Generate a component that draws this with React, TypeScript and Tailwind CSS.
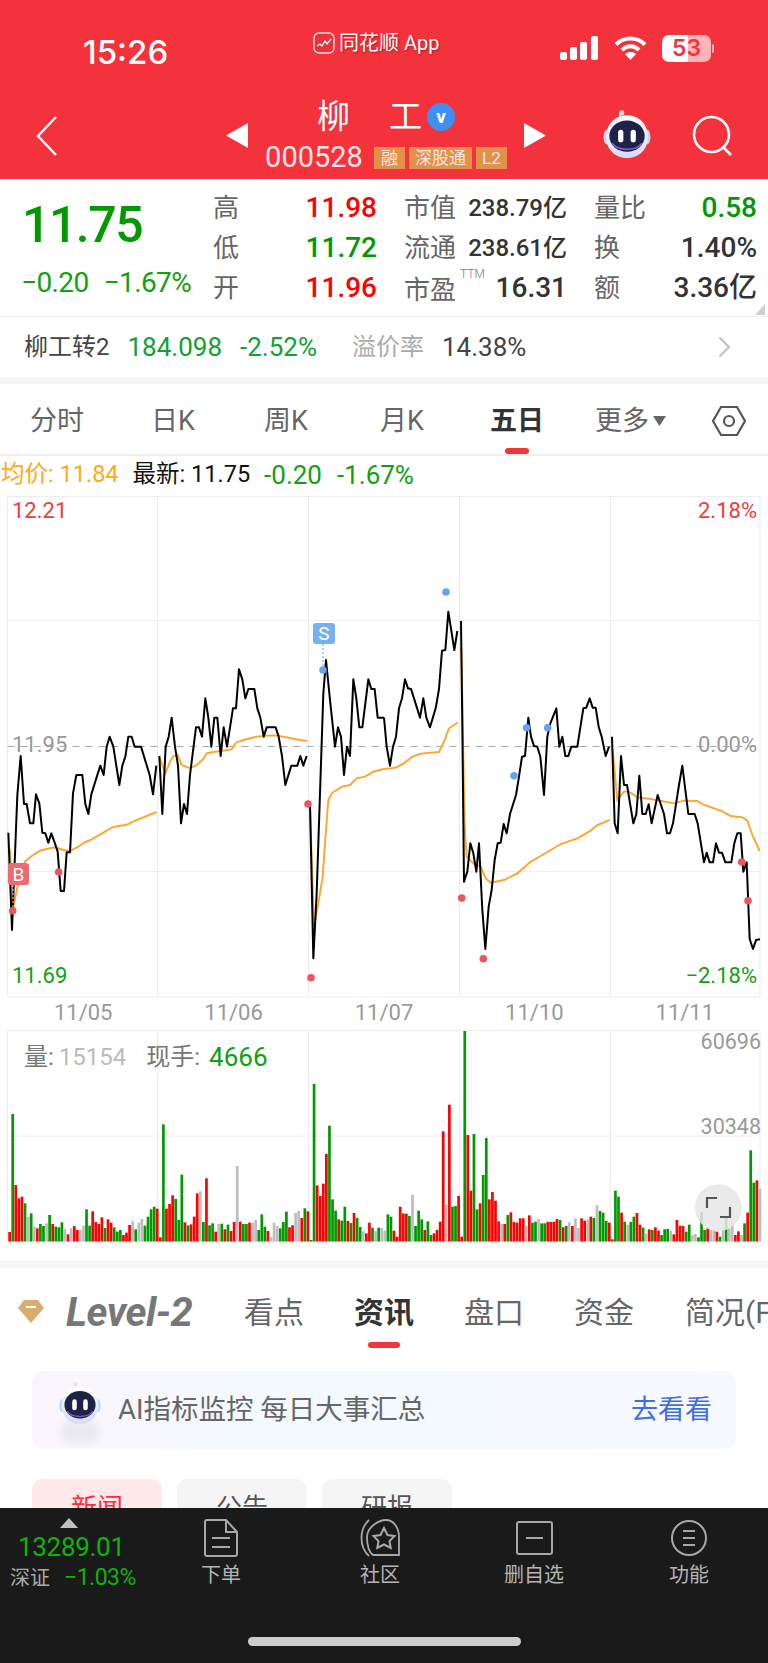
const GREEN = "#009a00";

// chart traces, read off the screenshot at 3x (flat x,y lists)
const priceLeft = [
  [25,518,36,810,52,405,62,288,72,432,80,432,90,490,100,490,108,403,118,430,127,518,136,520,145,548,154,520,164,548,173,575,182,693,192,693,200,577,210,577,219,400,229,345,247,345,256,432,265,462,274,403,292,345,301,317,311,345,320,260,329,230,340,260,358,375,367,317,376,290,385,230,395,230,404,260,423,260,449,345,459,403,469,317],
  [478,288,487,462,497,260,506,230,515,173,525,260,534,317,543,490,552,432,561,462,570,345,588,202,597,202,606,230,616,115,625,173,634,260,643,173,652,173,662,288,671,202,681,260,699,145,708,145,717,28,727,58,736,115,745,87,763,87,772,145,781,173,791,230,800,202,827,202,836,230,846,288,856,375,874,317,892,317,901,288,910,317,920,288],
  [930,433,940,895,950,700,960,400,970,100,978,0,990,120,1005,260,1014,202,1023,230,1032,345,1041,260,1050,288,1060,58,1069,115,1078,202,1087,202,1105,58,1114,87,1124,87,1133,173,1152,173],
];
const priceRight = [
  [0,473,8,560,18,617,27,560,36,530,45,445,54,415,63,358,72,385,81,387,90,415,108,473,118,415,127,473,138,502,155,445,165,387,174,272,184,270,193,155,211,270,220,213],
  [231,183,235,500,240,965,250,935,259,850,268,880,277,935,285,850,295,1050,304,1167,314,1040,323,990,332,900,341,850,350,848,359,792,368,820,378,762,396,705,405,650,414,590,423,588,433,473,441,530,450,558,460,560,469,590,480,705,490,530,499,490,517,445,526,560,535,530,544,588,553,588,562,560,580,560,598,445,607,443,617,415,626,443,635,443,644,500,653,530,665,588,675,560],
  [684,530,692,790,701,820,711,588,720,675,729,675,748,790,757,762,766,647,775,762,785,762,794,733,803,790,821,705,840,762,849,820,858,820,867,790,885,675,895,617,913,762,932,762,941,790,960,907,968,878,977,907,987,907,996,850,1005,878,1014,878,1024,907,1042,907,1051,850,1060,820,1070,820,1078,935,1088,907,1097,1137,1107,1167,1116,1140,1128,1138],
];
const avgLeft = [
  [30,570,37,760,50,690,60,650,75,605,95,588,120,572,140,567,165,562,190,570,210,573,235,560,255,546,275,538,315,515,335,503,355,498,378,495,405,482,470,456],
  [478,290,496,340,510,305,520,288,533,285,545,315,570,325,590,315,610,297,620,280,640,276,695,268,708,248,730,240,770,230,800,227,830,226,860,232,900,240,922,243],
  [930,440,942,800,955,730,968,650,975,550,985,420,995,400,1025,380,1050,375,1070,355,1095,350,1120,335,1152,327],
];
const avgRight = [
  [0,627,35,623,60,610,85,590,110,581,140,578,165,576,180,545,195,505,222,487],
  [232,260,242,800,248,890,270,912,290,920,305,955,320,968,360,960,400,940,440,905,480,882,530,852,580,835,620,812,640,795,677,780],
  [686,570,700,720,720,695,735,695,760,712,800,717,870,730,900,722,940,723,960,735,1010,752,1040,768,1075,772,1090,782,1105,825,1127,873],
];

const volumes =
  "r636 g282 r495 r535 r530 g550 a590 g580 a620 r625 g612 g618 a610 g585 r612 g620 g622 g607 a628 r643 a625 r618 r630 a630 a617 g568 g617 r574 r606 r612 r592 g624 r598 r608 g622 g635 g630 r645 r638 r615 a604 g628 a608 a597 g617 g590 g568 g560 r566 r652 g313 r566 r552 r526 g537 g600 g464 r607 g616 r613 r590 r520 a514 g606 r475 g616 g610 r635 a612 g611 r628 g614 r633 r606 a438 r605 g612 g612 r608 a608 a600 g630 g583 g620 r633 a652 a608 a618 g625 g606 g575 r622 r616 a579 a573 r594 g565 r574 g660 g192 r496 r528 r491 r402 g317 g538 g572 r598 g602 g560 r603 g609 r579 g594 g621 a634 r640 r608 g623 a633 g623 a624 " +
  "a632 g583 g590 r632 r650 r560 r580 r581 g588 a524 g618 g572 g598 r630 g604 g645 r640 r630 r605 r334 a554 r254 g560 g558 r528 r650 g33 r345 r512 g342 g568 r550 g465 g354 r538 r516 r542 r604 a612 r612 g585 r577 r606 r608 r595 r595 a617 r586 g608 g605 a597 g610 g610 r606 r606 r605 r597 g600 r622 g618 a607 r618 a596 a624 r595 r602 a598 r590 g594 a556 g573 g578 g603 r608 r658 g512 g530 r578 g605 a614 g606 g590 r579 r614 g623 a640 r628 g630 r622 r632 g645 g628 g627 a632 r643 r600 r617 r618 g635 g614 a645 a642 g652 g576 g630 r625 a628 a630 r635 g650 a630 g590 a625 a605 r645 r634 a645 g610 r578 g391 g488 r481 a506";

const barColor: Record<string, string> = { r: "#ff0000", g: GREEN, a: "#bdbdbd" };

function pts(raw: number[], dx: number, dy: number) {
  const out: string[] = [];
  for (let i = 0; i < raw.length; i += 2) {
    out.push(`${(raw[i] + dx) / 3},${(raw[i + 1] + dy) / 3}`);
  }
  return out.join(" ");
}

function Robot({ size }: { size: number }) {
  return (
    <svg width={size} height={size} viewBox="0 0 48 48">
      <defs>
        <linearGradient id="robotShell" x1="0" y1="0" x2="0" y2="1">
          <stop offset="0" stopColor="#ffffff" />
          <stop offset="1" stopColor="#d6dcf5" />
        </linearGradient>
      </defs>
      <path d="M18 8c-2-4 0-6 2-5" stroke="#fff" strokeWidth="1.6" fill="none" />
      <circle cx="19" cy="3.5" r="2.4" fill="#f5dfe6" />
      <ellipse cx="4.5" cy="27" rx="3" ry="7" fill="#bcd6f7" />
      <ellipse cx="43.5" cy="27" rx="3" ry="7" fill="#bcd6f7" />
      <path d="M24 6c12 0 20 9 20 21 0 12-9 20-20 20S4 39 4 27C4 15 12 6 24 6z" fill="url(#robotShell)" />
      <ellipse cx="24" cy="26" rx="17" ry="15" fill="#1d2246" />
      <path d="M10 33c4 7 23 8 28 0" stroke="#8b5cf6" strokeWidth="1.4" fill="none" />
      <rect x="15.5" y="20" width="5" height="12" rx="2.5" fill="#fff" />
      <rect x="27.5" y="20" width="5" height="12" rx="2.5" fill="#fff" />
    </svg>
  );
}

function StatusBar() {
  return (
    <div className="h-[96px] flex items-center pl-[83px] pr-[54px] text-white">
      <span className="w-[230px] text-[33px] font-medium font-['Inter',sans-serif] leading-none pt-[8px]">15:26</span>
      <div className="flex items-center gap-[4px] -mt-[10px] [text-shadow:1px_1px_2px_rgba(120,0,0,0.5)]">
        <svg width="22" height="22" viewBox="0 0 22 22">
          <rect x="1" y="1" width="20" height="20" rx="5" fill="#e8333b" stroke="#ffd9d9" strokeWidth="1.4" />
          <path d="M4 14l3-2 2 2 3-5 2 3 4-5" stroke="#fff" strokeWidth="1.3" fill="none" />
        </svg>
        <span className="text-[20px] leading-none">同花顺 App</span>
      </div>
      <div className="ml-auto flex items-center">
        <svg width="38" height="24" viewBox="0 0 38 24" fill="#fff">
          <rect x="0" y="16" width="7" height="8" rx="2" />
          <rect x="10" y="11" width="7" height="13" rx="2" />
          <rect x="20" y="6" width="7" height="18" rx="2" />
          <rect x="31" y="0" width="7" height="24" rx="2" />
        </svg>
        <svg className="ml-[16px]" width="33" height="24" viewBox="0 0 33 24" fill="none" stroke="#fff" strokeWidth="4">
          <path d="M2 8.5c8-8 21-8 29 0" />
          <path d="M8 14c5-5 12-5 17 0" />
          <path d="M16.5 24l-5.5-6c3-2.6 8-2.6 11 0z" fill="#fff" stroke="none" />
        </svg>
        <div className="ml-[15px] w-[49px] h-[27px] rounded-[7px] bg-[linear-gradient(90deg,#ffffff_53%,#ffb3b8_53%)] flex items-center justify-center">
          <span className="text-[23px] leading-none font-semibold text-[#f3323c] font-['Inter',sans-serif]">53</span>
        </div>
        <div className="ml-[1px] w-[2px] h-[9px] rounded-r bg-[#ffb3b8]" />
      </div>
    </div>
  );
}

function NavRow() {
  return (
    <div className="h-[83px] flex items-center pl-[36px] text-white">
      <svg className="-mt-[4px]" width="21" height="40" viewBox="0 0 21 40" fill="none" stroke="#fff" strokeWidth="2.4">
        <path d="M20 1L2 20l18 19" />
      </svg>
      <svg className="ml-[169px] -mt-[4px]" width="22" height="25" viewBox="0 0 22 25" fill="#fff">
        <path d="M22 0v25L0 12.500z" />
      </svg>
      <div className="w-[276px] flex flex-col items-center -mt-[6px]">
        <div className="flex items-center h-[40px]">
          <span className="text-[33px] leading-none">柳</span>
          <span className="text-[33px] leading-none ml-[39px]">工</span>
          <span className="ml-[5px] w-[28px] h-[28px] rounded-full bg-[#3f8ff0] flex items-center justify-center text-[19px] font-bold leading-none">v</span>
        </div>
        <div className="flex items-center h-[30px] mt-[6px] text-[#ffe3e5]">
          <span className="text-[29px] leading-none mr-[11px]">000528</span>
          <span className="h-[22px] w-[31px] bg-[#e2914a] text-[17px] leading-[22px] text-center mr-[4px]">融</span>
          <span className="h-[22px] w-[63px] bg-[#e2914a] text-[17px] leading-[22px] text-center mr-[4px]">深股通</span>
          <span className="h-[22px] w-[31px] bg-[#e2914a] text-[17px] leading-[22px] text-center">L2</span>
        </div>
      </div>
      <svg className="-mt-[4px]" width="22" height="25" viewBox="0 0 22 25" fill="#fff">
        <path d="M0 0v25l22-12.500z" />
      </svg>
      <div className="ml-[56px] -mt-[8px]">
        <Robot size={50} />
      </div>
      <svg className="ml-[40px] -mt-[4px]" width="43" height="41" viewBox="0 0 43 41" fill="none" stroke="#fff" strokeWidth="2.6">
        <circle cx="19.500" cy="19.500" r="17.500" />
        <path d="M32 33l7 7" />
      </svg>
    </div>
  );
}

function Cell({ label, value, color, sup }: { label: string; value: string; color: string; sup?: boolean }) {
  return (
    <div className="flex items-center justify-between h-[40px]">
      <span className={sup ? "relative top-[2px] text-[26px] text-[#666] leading-none" : "text-[26px] text-[#666] leading-none"}>
        {label}
        {sup && <sup className="absolute left-[56px] top-[-9px] text-[12px] font-light text-[#777] leading-none">TTM</sup>}
      </span>
      <span className="font-medium leading-none whitespace-nowrap" style={{ color }}>
        {value}
      </span>
    </div>
  );
}

function Quote() {
  return (
    <div className="relative h-[138px] flex pl-[21px] pt-[9px] border-b border-[#ececec]">
      <div className="w-[192px]">
        <div className="pl-[1px] mt-[12px] text-[50px] font-medium leading-none tracking-[-1.5px] text-[#009a00]">11.75</div>
        <div className="mt-[19px] flex gap-[15px] text-[28px] leading-none tracking-[-0.6px] text-[#12a012] whitespace-nowrap">
          <span>−0.20</span>
          <span>−1.67%</span>
        </div>
      </div>
      <div className="grid content-start grid-cols-[164px_163px_163px] gap-x-[27px] text-[28px]">
        <Cell label="高" value="11.98" color="#ff0000" />
        <div className="text-[24px]"><Cell label="市值" value="238.79亿" color="#333" /></div>
        <Cell label="量比" value="0.58" color="#009a00" />
        <Cell label="低" value="11.72" color="#009a00" />
        <div className="text-[24px]"><Cell label="流通" value="238.61亿" color="#333" /></div>
        <Cell label="换" value="1.40%" color="#333" />
        <Cell label="开" value="11.96" color="#ff0000" />
        <Cell label="市盈" value="16.31" color="#333" sup />
        <Cell label="额" value="3.36亿" color="#333" />
      </div>
      <svg className="absolute right-[3px] bottom-[1px]" width="10" height="11" viewBox="0 0 10 11" fill="#d0d0d0">
        <path d="M10 0v11H0z" />
      </svg>
    </div>
  );
}

function BondRow() {
  return (
    <div className="h-[60px] flex items-center pl-[24px] pr-[37px] text-[24px] leading-none">
      <span className="text-[#444]">柳工转2</span>
      <span className="ml-[18px] text-[#12a032] text-[26px]">184.098</span>
      <span className="ml-[18px] text-[#12a032] text-[26px]">-2.52%</span>
      <span className="ml-[35px] text-[#aaa]">溢价率</span>
      <span className="ml-[18px] text-[#444] text-[26px]">14.38%</span>
      <svg className="ml-auto" width="13" height="22" viewBox="0 0 13 22" fill="none" stroke="#c4c4c4" strokeWidth="2.4">
        <path d="M1.500 1.500L11 11l-9.500 9.500" />
      </svg>
    </div>
  );
}

function Band() {
  return <div className="h-[7px] bg-[#f5f5f5]" />;
}

function PeriodTabs() {
  return (
    <div className="relative h-[72px] flex items-center pt-[4px] text-[27px] leading-none text-[#666] border-b-2 border-[#eee]">
      <span className="absolute left-[30px]">分时</span>
      <span className="absolute left-[151px]">日K</span>
      <span className="absolute left-[264px]">周K</span>
      <span className="absolute left-[380px]">月K</span>
      <span className="absolute left-[490px] font-semibold text-[#333]">五日</span>
      <span className="absolute left-[595px] flex items-center">
        更多
        <svg className="ml-[4px]" width="13" height="10" viewBox="0 0 13 10" fill="#666">
          <path d="M0 0h13L6.500 10z" />
        </svg>
      </span>
      <svg className="absolute left-[711px]" width="36" height="32" viewBox="0 0 36 32" fill="none" stroke="#555" strokeWidth="2.200">
        <path d="M10 2h16l8 14-8 14H10L2 16z" />
        <circle cx="18" cy="16" r="5" />
      </svg>
      <div className="absolute left-[505px] bottom-0 w-[24px] h-[6px] rounded-full bg-[#f5333a]" />
    </div>
  );
}

function QuoteLine() {
  return (
    <div className="h-[38px] flex items-center pl-[1px] text-[23.5px] leading-none whitespace-nowrap">
      <span className="text-[#ffa916]">均价: 11.84</span>
      <span className="ml-[14px] text-[#111]">最新: 11.75</span>
      <span className="ml-[14px] text-[#12a012] text-[26px]">-0.20</span>
      <span className="ml-[15px] text-[#12a012] text-[26px]">-1.67%</span>
    </div>
  );
}

const priceVerticals = [7.5, 157.5, 308.5, 459.5, 610.5, 760];

function PriceChart() {
  return (
    <div className="relative h-[528px]">
      <svg className="block" width="768" height="506" viewBox="0 0 768 506">
        <g transform="translate(0,-494)">
          {priceVerticals.map((x) => (
            <line key={x} x1={x} x2={x} y1="496.500" y2="997" stroke="#ececec" />
          ))}
          {[496.5, 620.5, 871.5, 997].map((y) => (
            <line key={y} x1="7.500" x2="760" y1={y} y2={y} stroke="#eeeeee" />
          ))}
          <line x1="7.500" x2="760" y1="746.500" y2="746.500" stroke="#aaaaaa" strokeWidth="1.200" strokeDasharray="7 6" />
          {avgLeft.map((p, i) => (
            <polyline key={i} points={pts(p, 0, 1980)} fill="none" stroke="#ffa42e" strokeWidth="1.900" />
          ))}
          {avgRight.map((p, i) => (
            <polyline key={i} points={pts(p, 1152, 1680)} fill="none" stroke="#ffa42e" strokeWidth="1.900" />
          ))}
          {priceLeft.map((p, i) => (
            <polyline key={i} points={pts(p, 0, 1980)} fill="none" stroke="#000" strokeWidth="2" strokeLinejoin="round" />
          ))}
          {priceRight.map((p, i) => (
            <polyline key={i} points={pts(p, 1152, 1680)} fill="none" stroke="#000" strokeWidth="2" strokeLinejoin="round" />
          ))}
          <line x1="323" x2="323" y1="644" y2="668" stroke="#79b0f0" strokeWidth="1.200" strokeDasharray="2 2" />
          <line x1="13" x2="13" y1="885" y2="908" stroke="#f3a0a4" strokeWidth="1.200" strokeDasharray="2 2" />
          {[[446, 592], [526.7, 727.7], [547.7, 727.7], [514, 775.7], [323, 670]].map(([x, y]) => (
            <circle key={x} cx={x} cy={y} r="3.800" fill="#66a3ee" />
          ))}
          {[[12.7, 910.7], [58.7, 872], [308, 804], [311, 977.7], [461.7, 898], [483.3, 958.7], [741.7, 862], [748, 900.7]].map(([x, y]) => (
            <circle key={x} cx={x} cy={y} r="3.800" fill="#ec5560" />
          ))}
          <rect x="313" y="623" width="22" height="21" rx="3" fill="#79b0f0" />
          <text x="324" y="640" textAnchor="middle" fontSize="19" fill="#fff">S</text>
          <rect x="8" y="863" width="21" height="22" rx="3" fill="#ef6a70" />
          <text x="18.500" y="881" textAnchor="middle" fontSize="19" fill="#fff">B</text>
        </g>
      </svg>
      <span className="absolute left-[12px] top-[6px] text-[22px] leading-none text-[#f23b3b]">12.21</span>
      <span className="absolute right-[11px] top-[6px] text-[22px] leading-none text-[#f23b3b]">2.18%</span>
      <span className="absolute left-[12px] top-[240px] text-[22px] leading-none text-[#999]">11.95</span>
      <span className="absolute right-[11px] top-[240px] text-[22px] leading-none text-[#999]">0.00%</span>
      <span className="absolute left-[12px] top-[471px] text-[22px] leading-none text-[#12a012]">11.69</span>
      <span className="absolute right-[11px] top-[471px] text-[22px] leading-none text-[#12a012]">−2.18%</span>
      <div className="absolute left-[8px] right-[8px] top-[508px] grid grid-cols-5 text-center text-[22px] leading-none text-[#999]">
        <span>11/05</span>
        <span>11/06</span>
        <span>11/07</span>
        <span>11/10</span>
        <span>11/11</span>
      </div>
    </div>
  );
}

function VolumeChart() {
  const bars = volumes.split(" ");
  return (
    <div className="relative h-[239px]">
      <svg className="block" width="768" height="225" viewBox="0 0 768 225">
        <g transform="translate(0,-1022)">
          {priceVerticals.map((x) => (
            <line key={x} x1={x} x2={x} y1="1030.500" y2="1242" stroke="#ececec" />
          ))}
          {[1030.5, 1136, 1242].map((y) => (
            <line key={y} x1="7.500" x2="760" y1={y} y2={y} stroke="#eeeeee" />
          ))}
          {bars.map((b, i) => {
            const top = Number(b.slice(1));
            return (
              <rect
                key={i}
                x={8.300 + i * 3.075}
                y={1020 + top / 3}
                width="2.700"
                height={(664.500 - top) / 3}
                fill={barColor[b[0]]}
              />
            );
          })}
          <circle cx="718.300" cy="1207.700" r="23.500" fill="#e6e6e6" fillOpacity="0.850" />
          <path d="M707 1208v-10h10M730 1207v10h-10" fill="none" stroke="#555" strokeWidth="2.200" />
        </g>
      </svg>
      <div className="absolute left-[24px] top-[22px] flex items-center text-[24px] leading-none">
        <span className="text-[#777]">量:</span>
        <span className="ml-[5px] text-[#bbb]">15154</span>
        <span className="ml-[20px] text-[#777]">现手:</span>
        <span className="ml-[9px] text-[#12a012] text-[26px]">4666</span>
      </div>
      <span className="absolute right-[7px] top-[9px] text-[21.500px] leading-none text-[#999]">60696</span>
      <span className="absolute right-[7px] top-[94px] text-[21.500px] leading-none text-[#999]">30348</span>
    </div>
  );
}

function NewsTabs() {
  return (
    <div className="relative h-[96px] flex items-center pb-[6px] text-[30px] leading-none text-[#666] overflow-hidden">
      <svg className="absolute left-[18px] top-[32px]" width="26" height="23" viewBox="0 0 26 23">
        <path d="M6 0h14l6 8-13 15L0 8z" fill="#d9ad6c" />
        <path d="M8 6h10v2H8z" fill="#fff" />
      </svg>
      <span className="absolute left-[66px] text-[40px] font-bold italic text-[#777] tracking-[-0.5px]">Level-2</span>
      <span className="absolute left-[244px]">看点</span>
      <span className="absolute left-[354px] font-semibold text-[#333]">资讯</span>
      <span className="absolute left-[464px]">盘口</span>
      <span className="absolute left-[574px]">资金</span>
      <span className="absolute left-[685px] whitespace-nowrap">简况(F10)</span>
      <div className="absolute left-[368px] bottom-[16px] w-[32px] h-[6px] rounded-full bg-[#f5333a]" />
    </div>
  );
}

function AiBanner() {
  return (
    <div className="mx-[32px] mt-[7px] h-[78px] rounded-[12px] bg-[linear-gradient(90deg,#fbf5fc,#f4f8ff_30%,#f6f9ff)] flex items-center pl-[25px] pr-[24px] text-[27.500px] leading-none">
      <div className="relative w-[46px] h-[62px] mt-[4px] flex justify-center">
        <div className="absolute bottom-0 left-[4px] w-[38px] h-[22px] rounded-full bg-[#e9e9f0] blur-[3px]" />
        <div className="relative">
          <Robot size={44} />
        </div>
      </div>
      <span className="ml-[15px] text-[#666]">AI指标监控 每日大事汇总</span>
      <span className="ml-auto text-[27px] text-[#3f6fe0]">去看看</span>
    </div>
  );
}

function NewsChips() {
  return (
    <div className="mt-[30px] pl-[32px] flex gap-[15px] text-[26px] leading-none">
      <div className="w-[130px] h-[60px] rounded-t-[10px] bg-[#ffe9ea] text-[#ff2a3a] text-center pt-[16px]">新闻</div>
      <div className="w-[130px] h-[60px] rounded-t-[10px] bg-[#f5f5f5] text-[#555] text-center pt-[16px]">公告</div>
      <div className="w-[130px] h-[60px] rounded-t-[10px] bg-[#f5f5f5] text-[#555] text-center pt-[16px]">研报</div>
    </div>
  );
}

function TabItem({ center, label, children }: { center: number; label: string; children: React.ReactNode }) {
  return (
    <div className="absolute top-[11px] w-[100px] flex flex-col items-center" style={{ left: center - 50 }}>
      <div className="h-[38px] flex items-center">{children}</div>
      <span className="mt-[8px] text-[20px] leading-none text-[#b5b5b5]">{label}</span>
    </div>
  );
}

function BottomBar() {
  return (
    <div className="relative h-[155px] bg-[#1a1a1a]">
      <svg className="absolute left-[60px] top-[10px]" width="18" height="10" viewBox="0 0 18 10" fill="#c0c0c0">
        <path d="M9 0l9 10H0z" />
      </svg>
      <span className="absolute left-[18px] top-[26px] text-[26px] leading-none text-[#0cb40c] tracking-[-0.3px]">13289.01</span>
      <span className="absolute left-[10px] top-[60px] text-[20px] leading-none text-[#aaa]">深证</span>
      <span className="absolute left-[64px] top-[58px] text-[23px] leading-none text-[#0cb40c] tracking-[-0.5px]">−1.03%</span>
      <TabItem center={221} label="下单">
        <svg width="34" height="38" viewBox="0 0 34 38" fill="none" stroke="#a8a8a8" strokeWidth="2">
          <path d="M3 1h19l11 12v22a2 2 0 0 1-2 2H3a2 2 0 0 1-2-2V3a2 2 0 0 1 2-2z" />
          <path d="M22 1v12h11M8 19h18M8 28h18" />
        </svg>
      </TabItem>
      <TabItem center={380} label="社区">
        <svg width="41" height="38" viewBox="0 0 41 38" fill="none" stroke="#a8a8a8" strokeWidth="1.800">
          <path d="M9 37C-1 28-1 10 9 1" />
          <path d="M13 36h26V18C39 8 33 1 26 1S7 8 7 18c0 9 2 15 6 18z" />
          <path d="M24 9l3.500 7 7 1-5 5 1.200 7-6.700-3.500-6.700 3.500 1.200-7-5-5 7-1z" strokeWidth="2" />
        </svg>
      </TabItem>
      <TabItem center={534} label="删自选">
        <svg width="37" height="34" viewBox="0 0 37 34" fill="none" stroke="#a8a8a8" strokeWidth="2">
          <rect x="1" y="1" width="35" height="32" rx="2" />
          <path d="M10 17h17" />
        </svg>
      </TabItem>
      <TabItem center={689} label="功能">
        <svg width="36" height="36" viewBox="0 0 36 36" fill="none" stroke="#a8a8a8" strokeWidth="2">
          <circle cx="18" cy="18" r="17" />
          <path d="M12 11h12M12 18h12M12 25h12" />
        </svg>
      </TabItem>
      <div className="absolute left-[248px] top-[129px] w-[273px] h-[9px] rounded-full bg-[#cccccc]" />
    </div>
  );
}

export default function App() {
  return (
    <div className="w-[768px] h-[1663px] flex flex-col overflow-hidden bg-white font-['Roboto','Noto_Sans_CJK_SC',sans-serif]">
      <div className="h-[1508px] overflow-hidden">
        <div className="h-[179px] bg-[#f3323c]">
          <StatusBar />
          <NavRow />
        </div>
        <Quote />
        <BondRow />
        <Band />
        <PeriodTabs />
        <QuoteLine />
        <PriceChart />
        <VolumeChart />
        <Band />
        <NewsTabs />
        <AiBanner />
        <NewsChips />
      </div>
      <BottomBar />
    </div>
  );
}
